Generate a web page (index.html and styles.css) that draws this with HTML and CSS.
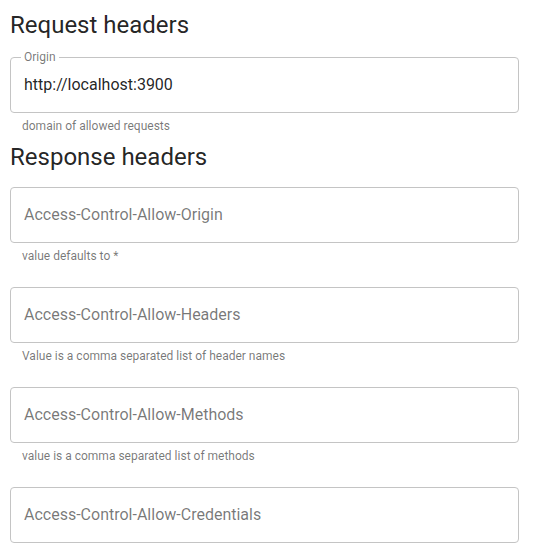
FILE: index.html
```html
<!DOCTYPE html>
<html lang="en">
<head>
<meta charset="utf-8">
<title>Headers</title>
<link rel="stylesheet" href="styles.css">
</head>
<body>
<div class="page">
  <h5 class="heading">Request headers</h5>
  <div class="stack">
    <div class="field">
      <div class="box filled">
        <span class="label">Origin</span>
        <span class="value">http://localhost:3900</span>
      </div>
      <p class="helper">domain of allowed requests</p>
    </div>
  </div>

  <h5 class="heading heading-second">Response headers</h5>
  <div class="stack stack-second">
    <div class="field">
      <div class="box"><span class="placeholder">Access-Control-Allow-Origin</span></div>
      <p class="helper">value defaults to *</p>
    </div>
    <div class="field">
      <div class="box"><span class="placeholder">Access-Control-Allow-Headers</span></div>
      <p class="helper">Value is a comma separated list of header names</p>
    </div>
    <div class="field">
      <div class="box"><span class="placeholder">Access-Control-Allow-Methods</span></div>
      <p class="helper">value is a comma separated list of methods</p>
    </div>
    <div class="field">
      <div class="box"><span class="placeholder">Access-Control-Allow-Credentials</span></div>
    </div>
  </div>
</div>
</body>
</html>
```

FILE: styles.css
```css
html, body {
  margin: 0;
  padding: 0;
  background: #ffffff;
}

body {
  font-family: Roboto, "Liberation Sans", Arial, sans-serif;
  color: rgba(0, 0, 0, 0.87);
}

.page {
  padding: 9px 0 0 10px;
  width: 509px;
}

.heading {
  margin: 0;
  font-size: 24px;
  line-height: 32px;
  font-weight: 400;
  color: rgba(0, 0, 0, 0.87);
}

.heading-second {
  margin-top: 5px;
}

.stack {
  margin-top: 16px;
  display: flex;
  flex-direction: column;
  gap: 21px;
}

.stack-second {
  margin-top: 14px;
}

.field {
  display: flex;
  flex-direction: column;
}

.box {
  position: relative;
  height: 56px;
  box-sizing: border-box;
  border: 1px solid #c4c4c4;
  border-radius: 4px;
  padding: 0 13px 2px;
  display: flex;
  align-items: center;
  font-size: 16px;
  line-height: 23px;
}

.label {
  position: absolute;
  left: 10px;
  top: -7px;
  padding: 0 3px;
  background: #ffffff;
  font-size: 12px;
  line-height: 12px;
  color: rgba(0, 0, 0, 0.54);
}

.value {
  color: rgba(0, 0, 0, 0.87);
}

.placeholder {
  color: rgba(0, 0, 0, 0.54);
}

.helper {
  margin: 3px 0 0 12px;
  font-size: 12px;
  line-height: 20px;
  color: rgba(0, 0, 0, 0.54);
}
```
